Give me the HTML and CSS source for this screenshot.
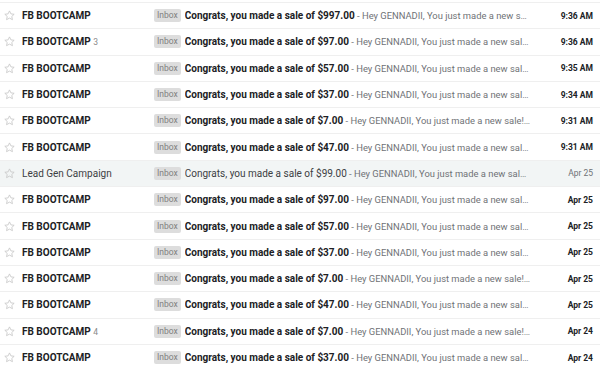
FILE: index.html
```html
<!DOCTYPE html>
<html lang="en">
<head>
    <meta charset="UTF-8">
    <title>Inbox</title>
    <link rel="stylesheet" href="styles.css">
</head>
<body>
    <div class="lista">
        <div class="linha nova">
            <span class="estrela"><svg viewBox="0 0 24 24"><path d="M12 3.5l2.6 5.5 6 .7-4.4 4.1 1.2 5.9L12 16.8l-5.4 2.9 1.2-5.9-4.4-4.1 6-.7z"/></svg></span>
            <span class="remetente">FB BOOTCAMP</span>
            <span class="etiqueta">Inbox</span>
            <span class="conteudo"><span class="assunto">Congrats, you made a sale of $997.00</span><span class="resumo"> - Hey GENNADII, You just made a new sale! Here</span></span>
            <span class="hora">9:36 AM</span>
        </div>
        <div class="linha nova">
            <span class="estrela"><svg viewBox="0 0 24 24"><path d="M12 3.5l2.6 5.5 6 .7-4.4 4.1 1.2 5.9L12 16.8l-5.4 2.9 1.2-5.9-4.4-4.1 6-.7z"/></svg></span>
            <span class="remetente">FB BOOTCAMP <span class="contagem">3</span></span>
            <span class="etiqueta">Inbox</span>
            <span class="conteudo"><span class="assunto">Congrats, you made a sale of $97.00</span><span class="resumo"> - Hey GENNADII, You just made a new sale! Here</span></span>
            <span class="hora">9:36 AM</span>
        </div>
        <div class="linha nova">
            <span class="estrela"><svg viewBox="0 0 24 24"><path d="M12 3.5l2.6 5.5 6 .7-4.4 4.1 1.2 5.9L12 16.8l-5.4 2.9 1.2-5.9-4.4-4.1 6-.7z"/></svg></span>
            <span class="remetente">FB BOOTCAMP</span>
            <span class="etiqueta">Inbox</span>
            <span class="conteudo"><span class="assunto">Congrats, you made a sale of $57.00</span><span class="resumo"> - Hey GENNADII, You just made a new sale! Here</span></span>
            <span class="hora">9:35 AM</span>
        </div>
        <div class="linha nova">
            <span class="estrela"><svg viewBox="0 0 24 24"><path d="M12 3.5l2.6 5.5 6 .7-4.4 4.1 1.2 5.9L12 16.8l-5.4 2.9 1.2-5.9-4.4-4.1 6-.7z"/></svg></span>
            <span class="remetente">FB BOOTCAMP</span>
            <span class="etiqueta">Inbox</span>
            <span class="conteudo"><span class="assunto">Congrats, you made a sale of $37.00</span><span class="resumo"> - Hey GENNADII, You just made a new sale! Here</span></span>
            <span class="hora">9:34 AM</span>
        </div>
        <div class="linha nova">
            <span class="estrela"><svg viewBox="0 0 24 24"><path d="M12 3.5l2.6 5.5 6 .7-4.4 4.1 1.2 5.9L12 16.8l-5.4 2.9 1.2-5.9-4.4-4.1 6-.7z"/></svg></span>
            <span class="remetente">FB BOOTCAMP</span>
            <span class="etiqueta">Inbox</span>
            <span class="conteudo"><span class="assunto">Congrats, you made a sale of $7.00</span><span class="resumo"> - Hey GENNADII, You just made a new sale! Here</span></span>
            <span class="hora">9:31 AM</span>
        </div>
        <div class="linha nova">
            <span class="estrela"><svg viewBox="0 0 24 24"><path d="M12 3.5l2.6 5.5 6 .7-4.4 4.1 1.2 5.9L12 16.8l-5.4 2.9 1.2-5.9-4.4-4.1 6-.7z"/></svg></span>
            <span class="remetente">FB BOOTCAMP</span>
            <span class="etiqueta">Inbox</span>
            <span class="conteudo"><span class="assunto">Congrats, you made a sale of $47.00</span><span class="resumo"> - Hey GENNADII, You just made a new sale! Here</span></span>
            <span class="hora">9:31 AM</span>
        </div>
        <div class="linha lida">
            <span class="estrela"><svg viewBox="0 0 24 24"><path d="M12 3.5l2.6 5.5 6 .7-4.4 4.1 1.2 5.9L12 16.8l-5.4 2.9 1.2-5.9-4.4-4.1 6-.7z"/></svg></span>
            <span class="remetente">Lead Gen Campaign</span>
            <span class="etiqueta">Inbox</span>
            <span class="conteudo"><span class="assunto">Congrats, you made a sale of $99.00</span><span class="resumo"> - Hey GENNADII, You just made a new sale! Here</span></span>
            <span class="hora">Apr 25</span>
        </div>
        <div class="linha nova">
            <span class="estrela"><svg viewBox="0 0 24 24"><path d="M12 3.5l2.6 5.5 6 .7-4.4 4.1 1.2 5.9L12 16.8l-5.4 2.9 1.2-5.9-4.4-4.1 6-.7z"/></svg></span>
            <span class="remetente">FB BOOTCAMP</span>
            <span class="etiqueta">Inbox</span>
            <span class="conteudo"><span class="assunto">Congrats, you made a sale of $97.00</span><span class="resumo"> - Hey GENNADII, You just made a new sale! Here</span></span>
            <span class="hora">Apr 25</span>
        </div>
        <div class="linha nova">
            <span class="estrela"><svg viewBox="0 0 24 24"><path d="M12 3.5l2.6 5.5 6 .7-4.4 4.1 1.2 5.9L12 16.8l-5.4 2.9 1.2-5.9-4.4-4.1 6-.7z"/></svg></span>
            <span class="remetente">FB BOOTCAMP</span>
            <span class="etiqueta">Inbox</span>
            <span class="conteudo"><span class="assunto">Congrats, you made a sale of $57.00</span><span class="resumo"> - Hey GENNADII, You just made a new sale! Here</span></span>
            <span class="hora">Apr 25</span>
        </div>
        <div class="linha nova">
            <span class="estrela"><svg viewBox="0 0 24 24"><path d="M12 3.5l2.6 5.5 6 .7-4.4 4.1 1.2 5.9L12 16.8l-5.4 2.9 1.2-5.9-4.4-4.1 6-.7z"/></svg></span>
            <span class="remetente">FB BOOTCAMP</span>
            <span class="etiqueta">Inbox</span>
            <span class="conteudo"><span class="assunto">Congrats, you made a sale of $37.00</span><span class="resumo"> - Hey GENNADII, You just made a new sale! Here</span></span>
            <span class="hora">Apr 25</span>
        </div>
        <div class="linha nova">
            <span class="estrela"><svg viewBox="0 0 24 24"><path d="M12 3.5l2.6 5.5 6 .7-4.4 4.1 1.2 5.9L12 16.8l-5.4 2.9 1.2-5.9-4.4-4.1 6-.7z"/></svg></span>
            <span class="remetente">FB BOOTCAMP</span>
            <span class="etiqueta">Inbox</span>
            <span class="conteudo"><span class="assunto">Congrats, you made a sale of $7.00</span><span class="resumo"> - Hey GENNADII, You just made a new sale! Here</span></span>
            <span class="hora">Apr 25</span>
        </div>
        <div class="linha nova">
            <span class="estrela"><svg viewBox="0 0 24 24"><path d="M12 3.5l2.6 5.5 6 .7-4.4 4.1 1.2 5.9L12 16.8l-5.4 2.9 1.2-5.9-4.4-4.1 6-.7z"/></svg></span>
            <span class="remetente">FB BOOTCAMP</span>
            <span class="etiqueta">Inbox</span>
            <span class="conteudo"><span class="assunto">Congrats, you made a sale of $47.00</span><span class="resumo"> - Hey GENNADII, You just made a new sale! Here</span></span>
            <span class="hora">Apr 25</span>
        </div>
        <div class="linha nova">
            <span class="estrela"><svg viewBox="0 0 24 24"><path d="M12 3.5l2.6 5.5 6 .7-4.4 4.1 1.2 5.9L12 16.8l-5.4 2.9 1.2-5.9-4.4-4.1 6-.7z"/></svg></span>
            <span class="remetente">FB BOOTCAMP <span class="contagem">4</span></span>
            <span class="etiqueta">Inbox</span>
            <span class="conteudo"><span class="assunto">Congrats, you made a sale of $7.00</span><span class="resumo"> - Hey GENNADII, You just made a new sale! Here</span></span>
            <span class="hora">Apr 24</span>
        </div>
        <div class="linha nova">
            <span class="estrela"><svg viewBox="0 0 24 24"><path d="M12 3.5l2.6 5.5 6 .7-4.4 4.1 1.2 5.9L12 16.8l-5.4 2.9 1.2-5.9-4.4-4.1 6-.7z"/></svg></span>
            <span class="remetente">FB BOOTCAMP</span>
            <span class="etiqueta">Inbox</span>
            <span class="conteudo"><span class="assunto">Congrats, you made a sale of $37.00</span><span class="resumo"> - Hey GENNADII, You just made a new sale! Here</span></span>
            <span class="hora">Apr 24</span>
        </div>
    </div>
</body>
</html>
```

FILE: styles.css
```css
body {
    margin: 0;
    background: #fff;
    font-family: Roboto, "Liberation Sans", Arial, sans-serif;
    font-size: 10px;
    color: #202124;
    overflow: hidden;
}
.lista {
    padding-top: 2px;
}
.linha {
    display: flex;
    align-items: center;
    height: 26.3px;
    box-sizing: border-box;
    border-top: 1px solid #efefef;
    background: #fff;
}
.linha.lida {
    background: #f2f5f5;
}
.estrela {
    width: 19px;
    display: flex;
    justify-content: center;
    margin-right: 3px;
}
.estrela svg {
    width: 13px;
    height: 13px;
    fill: none;
    stroke: #c8c8c8;
    stroke-width: 1.6;
    stroke-linejoin: round;
}
.remetente {
    width: 132px;
    white-space: nowrap;
    overflow: hidden;
}
.nova .remetente,
.nova .assunto,
.nova .hora {
    font-weight: bold;
}
.lida .remetente,
.lida .assunto {
    color: #3c4043;
}
.contagem {
    font-weight: normal;
    color: #8a8a8a;
    font-size: 8.5px;
}
.etiqueta {
    background: #dddddd;
    color: #808080;
    font-size: 8.5px;
    padding: 1px 3px;
    border-radius: 2px;
    margin-right: 4px;
    line-height: 11px;
}
.conteudo {
    flex: 1;
    min-width: 0;
    white-space: nowrap;
    overflow: hidden;
    text-overflow: ellipsis;
    color: #6f7276;
    font-size: 9.4px;
}
.assunto {
    color: #202124;
    font-size: 10px;
}
.resumo {
    color: #6f7276;
}
.hora {
    width: 62px;
    text-align: right;
    padding-right: 7px;
    font-size: 8.5px;
    white-space: nowrap;
}
.lida .hora {
    color: #6f7276;
}
```
